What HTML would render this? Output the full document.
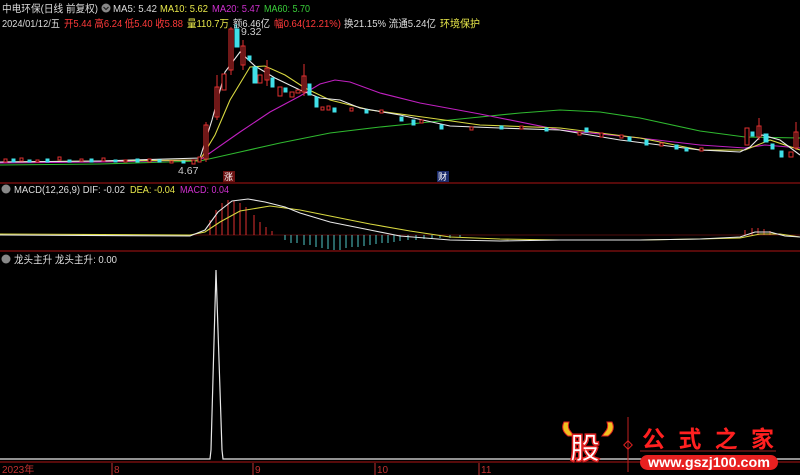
<!DOCTYPE html>
<html><head><meta charset="utf-8"><style>
html,body{margin:0;padding:0;background:#000;width:800px;height:475px;overflow:hidden}
svg{display:block;font-family:"Liberation Sans","Noto Sans CJK SC",sans-serif}
</style></head><body>
<svg width="800" height="475" viewBox="0 0 800 475" xmlns="http://www.w3.org/2000/svg" font-size="10.5">
<rect width="800" height="475" fill="#000"/>
<!-- header -->
<text x="2" y="12" fill="#ddd" textLength="96" lengthAdjust="spacingAndGlyphs">中电环保(日线 前复权)</text>
<circle cx="106" cy="8" r="4.5" fill="#888"/><path d="M103.5 7l2.5 2.5 2.5-2.5" stroke="#222" fill="none" stroke-width="1.2"/>
<text x="113" y="12" fill="#ddd" textLength="44" lengthAdjust="spacingAndGlyphs">MA5: 5.42</text>
<text x="160" y="12" fill="#e8e84a" textLength="48" lengthAdjust="spacingAndGlyphs">MA10: 5.62</text>
<text x="212" y="12" fill="#d030d0" textLength="48" lengthAdjust="spacingAndGlyphs">MA20: 5.47</text>
<text x="264" y="12" fill="#3ad03a" textLength="46" lengthAdjust="spacingAndGlyphs">MA60: 5.70</text>
<text x="2" y="27" fill="#ddd" textLength="58" lengthAdjust="spacingAndGlyphs">2024/01/12/五</text>
<text x="64" y="27" fill="#ff3a3a" textLength="119" lengthAdjust="spacingAndGlyphs">开5.44 高6.24 低5.40 收5.88</text>
<text x="187" y="27" fill="#e8e84a" textLength="42" lengthAdjust="spacingAndGlyphs">量110.7万</text>
<text x="233" y="27" fill="#ddd" textLength="37" lengthAdjust="spacingAndGlyphs">额6.46亿</text>
<text x="274" y="27" fill="#ff3a3a" textLength="67" lengthAdjust="spacingAndGlyphs">幅0.64(12.21%)</text>
<text x="344" y="27" fill="#ddd" textLength="92" lengthAdjust="spacingAndGlyphs">换21.15% 流通5.24亿</text>
<text x="440" y="27" fill="#e8e84a" textLength="40" lengthAdjust="spacingAndGlyphs">环境保护</text>
<text x="241" y="35" fill="#ccc">9.32</text>
<text x="178" y="174" fill="#ccc">4.67</text>
<!-- separators -->
<line x1="0" y1="183" x2="800" y2="183" stroke="#8a1010" stroke-width="1.2"/>
<line x1="0" y1="251" x2="800" y2="251" stroke="#8a1010" stroke-width="1.2"/>
<line x1="0" y1="462" x2="800" y2="462" stroke="#8a1010" stroke-width="1.2"/>
<!-- markers -->
<rect x="223" y="171" width="12" height="11" fill="#6a1010"/><text x="224" y="180" fill="#fff" font-size="9">涨</text>
<rect x="437" y="171" width="12" height="11" fill="#1a2a6a"/><text x="438" y="180" fill="#fff" font-size="9">财</text>
<!-- MAs -->
<g fill="none" stroke-width="1.1">
<polyline stroke="#2fb82f" points="0,165 100,164 200,161 240,152 280,143 330,133 380,127 420,123 470,118 520,113 560,110 600,112 640,118 700,131 745,137 800,138"/>
<polyline stroke="#c020c0" points="0,163 100,162 200,160 240,132 270,112 300,96 320,84 335,80 350,82 380,93 420,103 480,114 560,130 640,138 700,145 745,148 765,145 800,148"/>
<polyline stroke="#d8d840" points="0,162 100,161 200,160 215,135 230,100 250,67 265,66 285,75 305,88 330,100 370,110 430,118 480,125 560,128 640,138 700,150 745,150 770,140 800,150"/>
<polyline stroke="#e8e8e8" points="0,162 100,161 200,158 212,120 225,72 240,52 255,66 275,78 300,90 320,98 340,100 360,108 400,115 450,126 500,128 560,130 620,140 700,150 740,152 750,147 762,135 780,140 800,155"/>
</g>
<!-- candles -->
<g stroke-width="1">
<g fill="#000" stroke="#e03030">
<rect x="4" y="159" width="3" height="3"/><rect x="20" y="158" width="3" height="3"/><rect x="36" y="160" width="3" height="2"/><rect x="58" y="157" width="3" height="3"/><rect x="80" y="159" width="3" height="2"/><rect x="102" y="158" width="3" height="3"/><rect x="124" y="160" width="3" height="2"/><rect x="148" y="159" width="3" height="3"/><rect x="170" y="161" width="3" height="2"/>
<rect x="192" y="160" width="3" height="4"/><rect x="198" y="157" width="3" height="5"/>
<rect x="204" y="125" width="4" height="34"/><rect x="215" y="87" width="4" height="30"/><rect x="222" y="74" width="4" height="16"/><rect x="229" y="29" width="4" height="41"/><rect x="241" y="46" width="4" height="19"/>
<rect x="258" y="75" width="4" height="8"/><rect x="265" y="68" width="4" height="12"/><rect x="278" y="87" width="4" height="9"/><rect x="290" y="92" width="4" height="5"/><rect x="296" y="90" width="4" height="3"/><rect x="302" y="76" width="4" height="16"/>
<rect x="321" y="107" width="3" height="3"/><rect x="327" y="106" width="3" height="4"/><rect x="350" y="108" width="3" height="3"/><rect x="380" y="110" width="3" height="3"/><rect x="420" y="120" width="3" height="3"/><rect x="470" y="127" width="3" height="3"/><rect x="520" y="126" width="3" height="3"/><rect x="578" y="132" width="3" height="3"/><rect x="600" y="133" width="3" height="4"/><rect x="620" y="135" width="3" height="3"/><rect x="660" y="143" width="3" height="3"/><rect x="700" y="148" width="3" height="3"/>
<rect x="745" y="128" width="4" height="17"/><rect x="757" y="126" width="4" height="11"/><rect x="789" y="152" width="4" height="5"/><rect x="794" y="132" width="4" height="16"/>
</g>
<g stroke="#e03030"><line x1="206" y1="122" x2="206" y2="162"/><line x1="217" y1="75" x2="217" y2="120"/><line x1="231" y1="27" x2="231" y2="75"/><line x1="243" y1="40" x2="243" y2="70"/><line x1="304" y1="64" x2="304" y2="96"/><line x1="267" y1="60" x2="267" y2="86"/><line x1="759" y1="118" x2="759" y2="140"/><line x1="796" y1="122" x2="796" y2="150"/></g>
<g fill="#40e0e8" stroke="#40e0e8">
<rect x="12" y="159" width="3" height="3"/><rect x="28" y="160" width="3" height="2"/><rect x="46" y="159" width="3" height="3"/><rect x="68" y="160" width="3" height="2"/><rect x="90" y="159" width="3" height="3"/><rect x="114" y="160" width="3" height="2"/><rect x="136" y="159" width="3" height="3"/><rect x="158" y="160" width="3" height="2"/><rect x="182" y="161" width="3" height="2"/>
<rect x="235" y="29" width="4" height="18"/><rect x="248" y="56" width="3" height="4"/><rect x="253" y="67" width="4" height="16"/><rect x="271" y="78" width="3" height="9"/><rect x="284" y="88" width="3" height="4"/><rect x="308" y="84" width="3" height="11"/><rect x="315" y="97" width="3" height="10"/>
<rect x="333" y="108" width="3" height="4"/><rect x="365" y="110" width="3" height="3"/><rect x="400" y="117" width="3" height="4"/><rect x="412" y="120" width="3" height="5"/><rect x="440" y="125" width="3" height="4"/><rect x="500" y="126" width="3" height="3"/><rect x="545" y="128" width="3" height="3"/><rect x="585" y="128" width="3" height="4"/>
<rect x="628" y="137" width="3" height="4"/><rect x="645" y="140" width="3" height="5"/><rect x="675" y="145" width="3" height="4"/><rect x="685" y="148" width="3" height="3"/>
<rect x="751" y="132" width="3" height="4"/><rect x="764" y="134" width="4" height="8"/><rect x="771" y="144" width="3" height="5"/><rect x="780" y="151" width="3" height="6"/>
</g>
<line x1="236" y1="24" x2="236" y2="30" stroke="#40e0e8"/>
</g>
<!-- MACD panel -->
<circle cx="6" cy="189" r="4.5" fill="#888"/>
<text x="14" y="193" fill="#ddd" textLength="111" lengthAdjust="spacingAndGlyphs">MACD(12,26,9) DIF: -0.02</text>
<text x="130" y="193" fill="#e8e84a" textLength="45" lengthAdjust="spacingAndGlyphs">DEA: -0.04</text>
<text x="180" y="193" fill="#d030d0" textLength="49" lengthAdjust="spacingAndGlyphs">MACD: 0.04</text>
<line x1="0" y1="235" x2="800" y2="235" stroke="#6a1010" stroke-width="0.8"/>
<g stroke="#e03030" stroke-width="1">
<line x1="210" y1="235" x2="210" y2="220"/><line x1="216" y1="235" x2="216" y2="210"/><line x1="222" y1="235" x2="222" y2="203"/><line x1="228" y1="235" x2="228" y2="200"/><line x1="234" y1="235" x2="234" y2="201"/><line x1="240" y1="235" x2="240" y2="203"/><line x1="246" y1="235" x2="246" y2="207"/><line x1="254" y1="235" x2="254" y2="215"/><line x1="260" y1="235" x2="260" y2="222"/><line x1="266" y1="235" x2="266" y2="227"/><line x1="272" y1="235" x2="272" y2="231"/>
<line x1="745" y1="235" x2="745" y2="230"/><line x1="752" y1="235" x2="752" y2="228"/><line x1="758" y1="235" x2="758" y2="228"/><line x1="764" y1="235" x2="764" y2="229"/><line x1="770" y1="235" x2="770" y2="231"/>
</g>
<g stroke="#50c8c8" stroke-width="1">
<line x1="285" y1="235" x2="285" y2="240"/><line x1="291" y1="235" x2="291" y2="243"/><line x1="297" y1="235" x2="297" y2="243"/><line x1="304" y1="235" x2="304" y2="245"/><line x1="310" y1="235" x2="310" y2="245"/><line x1="316" y1="235" x2="316" y2="247"/><line x1="322" y1="235" x2="322" y2="248"/><line x1="328" y1="235" x2="328" y2="249"/><line x1="334" y1="235" x2="334" y2="250"/><line x1="340" y1="235" x2="340" y2="250"/><line x1="346" y1="235" x2="346" y2="248"/><line x1="352" y1="235" x2="352" y2="247"/><line x1="358" y1="235" x2="358" y2="247"/><line x1="364" y1="235" x2="364" y2="246"/><line x1="370" y1="235" x2="370" y2="245"/><line x1="376" y1="235" x2="376" y2="244"/><line x1="382" y1="235" x2="382" y2="243"/><line x1="388" y1="235" x2="388" y2="243"/><line x1="394" y1="235" x2="394" y2="242"/><line x1="400" y1="235" x2="400" y2="241"/><line x1="408" y1="235" x2="408" y2="240"/><line x1="416" y1="235" x2="416" y2="240"/><line x1="424" y1="235" x2="424" y2="239"/><line x1="432" y1="235" x2="432" y2="239"/><line x1="440" y1="235" x2="440" y2="238"/><line x1="450" y1="235" x2="450" y2="238"/><line x1="460" y1="235" x2="460" y2="237"/>
</g>
<g fill="none" stroke-width="1.1">
<polyline stroke="#d8d840" points="0,234 190,235 205,232 220,222 240,211 270,206 300,210 330,216 370,224 410,231 450,237 500,239 560,240 640,240 700,239 740,238 760,234 780,234 800,237"/>
<polyline stroke="#e8e8e8" points="0,235 190,236 205,230 218,212 232,201 248,199 265,202 285,207 300,213 330,222 370,230 400,236 450,240 500,241 560,240 640,240 700,239 740,237 755,232 770,232 785,236 800,237"/>
</g>
<!-- indicator panel -->
<circle cx="6" cy="259" r="4.5" fill="#888"/>
<text x="14" y="263" fill="#ddd" textLength="103" lengthAdjust="spacingAndGlyphs">龙头主升  龙头主升: 0.00</text>
<polyline fill="none" stroke="#e8e8e8" stroke-width="1.2" points="0,459 210,459 211,450 216,270 222,450 223,459 800,459"/>
<!-- x axis -->
<g fill="#c03030" font-size="10">
<text x="2" y="473">2023年</text>
<text x="114" y="473">8</text>
<text x="255" y="473">9</text>
<text x="377" y="473">10</text>
<text x="481" y="473">11</text>
</g>
<g stroke="#c03030"><line x1="112" y1="463" x2="112" y2="475"/><line x1="253" y1="463" x2="253" y2="475"/><line x1="375" y1="463" x2="375" y2="475"/><line x1="479" y1="463" x2="479" y2="475"/></g>
<!-- logo -->
<g>
<path d="M564 422 q-4 8 4 14 l6 0 l-3-4 q-4-4-2-10z" fill="#f0c020" stroke="#e02020"/>
<path d="M612 422 q4 8 -4 14 l-6 0 l3-4 q4-4 2-10z" fill="#f0c020" stroke="#e02020"/>
<text x="570" y="459" font-size="30" font-weight="bold" fill="#fff" stroke="#e02020" stroke-width="1.5">股</text>
<line x1="628" y1="417" x2="628" y2="472" stroke="#c02020"/>
<rect x="625" y="442" width="6" height="6" fill="none" stroke="#e02020" transform="rotate(45 628 445)"/>
<text x="642" y="447" font-size="23" font-weight="bold" fill="#ff2020" textLength="132" lengthAdjust="spacing">公式之家</text>
<line x1="640" y1="451" x2="776" y2="451" stroke="#a02020"/>
<rect x="640" y="455" width="138" height="15" rx="7.5" fill="#e82020"/>
<text x="648" y="467" font-size="14" font-weight="bold" fill="#fff" textLength="122" lengthAdjust="spacingAndGlyphs">www.gszj100.com</text>
</g>
</svg>
</body></html>
